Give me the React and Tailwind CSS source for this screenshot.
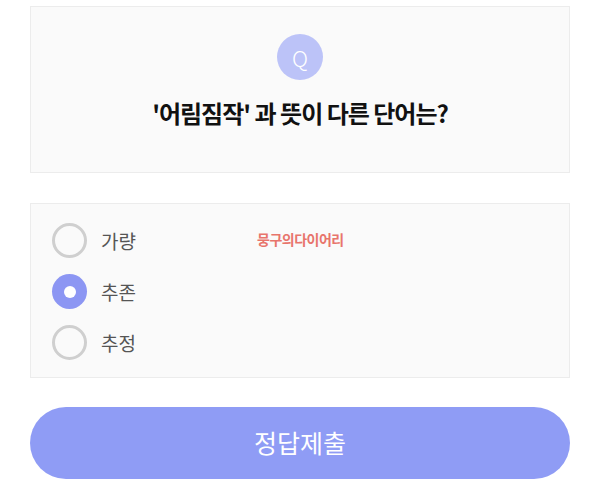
const options = ['가량', '추존', '추정'];

function Radio({ checked }) {
  if (checked) {
    return (
      <span className="flex h-[35px] w-[35px] items-center justify-center rounded-full bg-[#8c96f3]">
        <span className="h-[12px] w-[12px] rounded-full bg-white" />
      </span>
    );
  }
  return <span className="h-[35px] w-[35px] rounded-full border-[3px] border-[#cfcfcf] bg-[#fafafa]" />;
}

export default function App() {
  const selected = 1;

  return (
    <div
      className="flex min-h-[481px] flex-col bg-white px-[30px] pt-[6px]"
      style={{ fontFamily: '"Noto Sans CJK KR", "Noto Sans", sans-serif' }}
    >
      {/* Question card */}
      <div className="flex h-[167px] flex-col items-center border border-[#ececec] bg-[#fafafa] pt-[27px]">
        <div className="flex h-[46px] w-[46px] items-center justify-center rounded-full bg-[#bcc3f8] text-[22px] font-light text-white">
          Q
        </div>
        <h2 className="mt-[18px] text-[24px] font-bold leading-[30px] tracking-[-1px] text-[#111]">
          '어림짐작' 과 뜻이 다른 단어는?
        </h2>
      </div>

      {/* Options card */}
      <div className="relative mt-[30px] flex h-[175px] flex-col gap-[16px] border border-[#ececec] bg-[#fafafa] pl-[21px] pt-[19px]">
        {options.map((opt, i) => (
          <label key={opt} className="flex items-center gap-[14px]">
            <Radio checked={i === selected} />
            <span className="text-[19px] leading-[24px] text-[#555]">{opt}</span>
          </label>
        ))}
        <span className="absolute left-[226px] top-[25px] text-[14px] font-bold tracking-[-0.5px] text-[#e8756c]">
          뭉구의다이어리
        </span>
      </div>

      {/* Submit */}
      <button className="mt-[29px] h-[72px] w-full rounded-full bg-[#8f9cf5] text-[25px] text-white">
        정답제출
      </button>
    </div>
  );
}
